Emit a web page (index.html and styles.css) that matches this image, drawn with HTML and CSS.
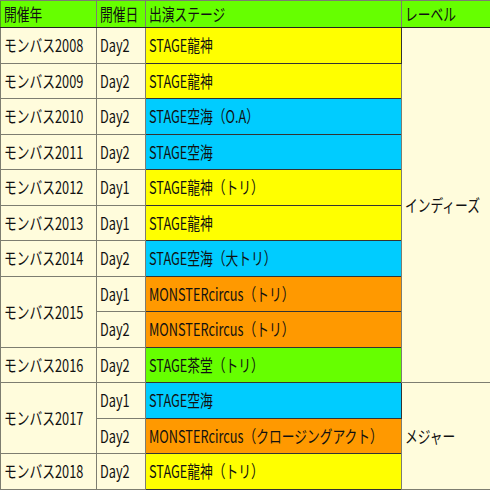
FILE: index.html
```html
<!DOCTYPE html>
<html lang="ja">
<head>
<meta charset="utf-8">
<link rel="stylesheet" href="styles.css">
</head>
<body>
<table class="grid">
  <colgroup>
    <col class="c-year"><col class="c-day"><col class="c-stage"><col class="c-label">
  </colgroup>
  <thead>
    <tr class="head">
      <th><span class="t">開催年</span></th>
      <th><span class="t">開催日</span></th>
      <th><span class="t">出演ステージ</span></th>
      <th><span class="t">レーベル</span></th>
    </tr>
  </thead>
  <tbody>
    <tr>
      <td class="cream"><span class="t">モンバス2008</span></td>
      <td class="cream"><span class="t">Day2</span></td>
      <td class="yellow"><span class="t">STAGE龍神</span></td>
      <td class="cream label" rowspan="10"><span class="t">インディーズ</span></td>
    </tr>
    <tr>
      <td class="cream"><span class="t">モンバス2009</span></td>
      <td class="cream"><span class="t">Day2</span></td>
      <td class="yellow"><span class="t">STAGE龍神</span></td>
    </tr>
    <tr>
      <td class="cream"><span class="t">モンバス2010</span></td>
      <td class="cream"><span class="t">Day2</span></td>
      <td class="cyan"><span class="t">STAGE空海（O.A）</span></td>
    </tr>
    <tr>
      <td class="cream"><span class="t">モンバス2011</span></td>
      <td class="cream"><span class="t">Day2</span></td>
      <td class="cyan"><span class="t">STAGE空海</span></td>
    </tr>
    <tr>
      <td class="cream"><span class="t">モンバス2012</span></td>
      <td class="cream"><span class="t">Day1</span></td>
      <td class="yellow"><span class="t">STAGE龍神（トリ）</span></td>
    </tr>
    <tr>
      <td class="cream"><span class="t">モンバス2013</span></td>
      <td class="cream"><span class="t">Day1</span></td>
      <td class="yellow"><span class="t">STAGE龍神</span></td>
    </tr>
    <tr>
      <td class="cream"><span class="t">モンバス2014</span></td>
      <td class="cream"><span class="t">Day2</span></td>
      <td class="cyan"><span class="t">STAGE空海（大トリ）</span></td>
    </tr>
    <tr>
      <td class="cream" rowspan="2"><span class="t">モンバス2015</span></td>
      <td class="cream"><span class="t">Day1</span></td>
      <td class="orange"><span class="t">MONSTERcircus（トリ）</span></td>
    </tr>
    <tr>
      <td class="cream"><span class="t">Day2</span></td>
      <td class="orange"><span class="t">MONSTERcircus（トリ）</span></td>
    </tr>
    <tr>
      <td class="cream"><span class="t">モンバス2016</span></td>
      <td class="cream"><span class="t">Day2</span></td>
      <td class="green"><span class="t">STAGE茶堂（トリ）</span></td>
    </tr>
    <tr>
      <td class="cream" rowspan="2"><span class="t">モンバス2017</span></td>
      <td class="cream"><span class="t">Day1</span></td>
      <td class="cyan"><span class="t">STAGE空海</span></td>
      <td class="cream label" rowspan="3"><span class="t">メジャー</span></td>
    </tr>
    <tr>
      <td class="cream"><span class="t">Day2</span></td>
      <td class="orange"><span class="t">MONSTERcircus（クロージングアクト）</span></td>
    </tr>
    <tr>
      <td class="cream"><span class="t">モンバス2018</span></td>
      <td class="cream"><span class="t">Day2</span></td>
      <td class="yellow"><span class="t">STAGE龍神（トリ）</span></td>
    </tr>
  </tbody>
</table>
</body>
</html>
```
FILE: styles.css
```css
html, body {
  margin: 0;
  padding: 0;
  background: #ffffff;
}
body {
  font-family: "Noto Sans CJK JP", "Noto Sans", sans-serif;
  font-size: 17px;
  color: #111111;
}
.grid {
  border-collapse: collapse;
  table-layout: fixed;
  width: 491px;
  border-top: 1px solid #222;
  border-bottom: 1px solid #222;
}
.c-year { width: 96px; }
.c-day { width: 49px; }
.c-stage { width: 256px; }
.c-label { width: 90px; }
th, td {
  padding: 0 0 0 3px;
  text-align: left;
  font-weight: normal;
  vertical-align: middle;
  white-space: nowrap;
  overflow: hidden;
  border: 1px solid #7d7d70;
  line-height: 20px;
}
.head th {
  background: #66ff00;
  height: 26px;
  border-bottom-color: #222;
  border-left-color: #4e9a1a;
}
td { height: 34.5px; }
.t {
  display: inline-block;
  transform: scaleX(0.75);
  transform-origin: 0 50%;
}
.cream { background: #fffcdc; }
.yellow { background: #ffff00; border-color: #333; }
.cyan { background: #00ccff; border-color: #333; }
.orange { background: #ff9900; border-color: #333; }
.green { background: #66ff00; border-color: #333; }
```
